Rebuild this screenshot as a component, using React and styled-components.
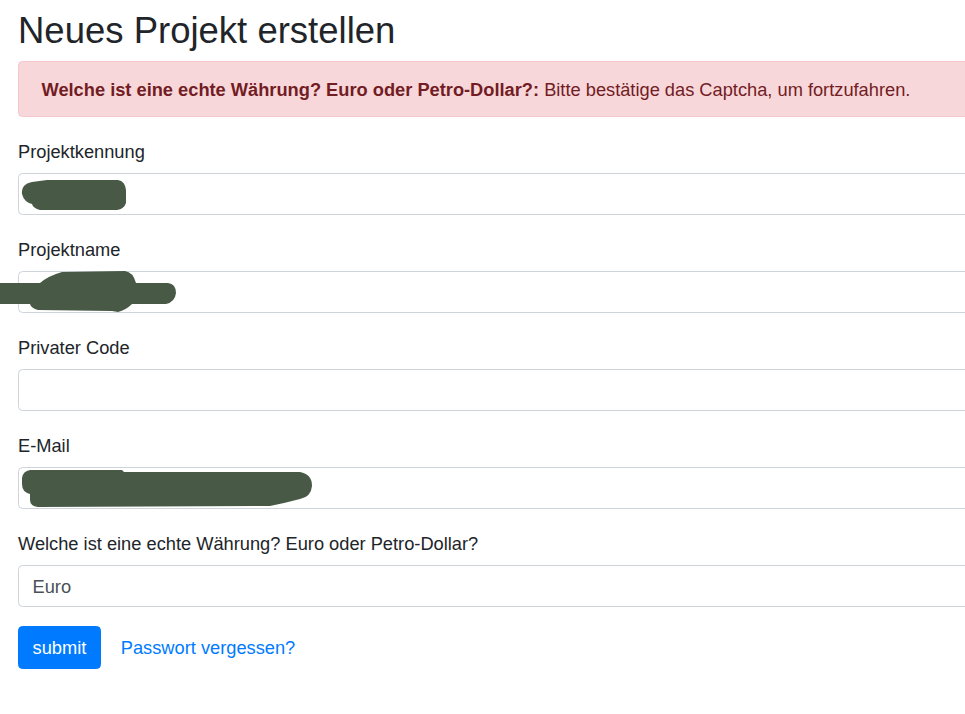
import React from "react";
import styled, { createGlobalStyle } from "styled-components";

const GlobalStyle = createGlobalStyle`
  html, body {
    margin: 0;
    padding: 0;
    overflow: hidden;
    background: #ffffff;
  }
  body {
    font-family: "Liberation Sans", Arial, sans-serif;
    font-size: 18.25px;
    line-height: 1.5;
    color: #212529;
  }
  * { box-sizing: border-box; }
`;

const Page = styled.div`
  position: relative;
  width: 1100px;
  padding: 9px 0 40px 18px;
`;

const Title = styled.h2`
  margin: 0 0 9px;
  font-size: 36.5px;
  font-weight: 400;
  line-height: 43px;
  color: #212529;
`;

const Alert = styled.div`
  padding: 14px 22.5px 13px;
  margin-bottom: 21px;
  border: 1px solid #f5c6cb;
  border-radius: 4.5px;
  background: #f8d7da;
  color: #721c24;
  line-height: 27px;
`;

const Strong = styled.strong`
  font-weight: 700;
`;

const Form = styled.form`
  display: flex;
  flex-direction: column;
`;

const Group = styled.div`
  display: flex;
  flex-direction: column;
  margin-bottom: 21px;
`;

const Label = styled.label`
  display: block;
  margin-bottom: 8px;
  line-height: 27px;
`;

const fieldCss = `
  display: block;
  width: 100%;
  height: 42px;
  padding: 6.75px 13.5px;
  font-family: "Liberation Sans", Arial, sans-serif;
  font-size: 18.25px;
  line-height: 27px;
  color: #495057;
  background: #fff;
  border: 1px solid #ced4da;
  border-radius: 4.5px;
  outline: none;
`;

const Input = styled.input`
  ${fieldCss}
`;

const Select = styled.select`
  ${fieldCss}
  appearance: none;
  -webkit-appearance: none;
`;

const Actions = styled.div`
  display: flex;
  align-items: center;
  gap: 20px;
  margin-top: -2px;
`;

const Button = styled.button`
  height: 43px;
  padding: 6.75px 13.5px;
  font-family: "Liberation Sans", Arial, sans-serif;
  font-size: 18.25px;
  line-height: 27px;
  color: #fff;
  background: #007bff;
  border: 1px solid #007bff;
  border-radius: 4.5px;
  cursor: pointer;
`;

const Link = styled.a`
  color: #007bff;
  text-decoration: none;
  font-size: 18.25px;
  line-height: 27px;
`;

const Redactions = styled.svg`
  position: absolute;
  top: 0;
  left: 0;
  width: 965px;
  height: 714px;
  pointer-events: none;
`;

const blobColor = "#485a46";

export default function App() {
  return (
    <>
      <GlobalStyle />
      <Page>
        <Title>Neues Projekt erstellen</Title>
        <Alert>
          <Strong>Welche ist eine echte Währung? Euro oder Petro-Dollar?:</Strong>{" "}
          Bitte bestätige das Captcha, um fortzufahren.
        </Alert>
        <Form onSubmit={(e) => e.preventDefault()}>
          <Group>
            <Label htmlFor="kennung">Projektkennung</Label>
            <Input id="kennung" type="text" />
          </Group>
          <Group>
            <Label htmlFor="name">Projektname</Label>
            <Input id="name" type="text" />
          </Group>
          <Group>
            <Label htmlFor="code">Privater Code</Label>
            <Input id="code" type="text" />
          </Group>
          <Group>
            <Label htmlFor="email">E-Mail</Label>
            <Input id="email" type="email" />
          </Group>
          <Group>
            <Label htmlFor="captcha">Welche ist eine echte Währung? Euro oder Petro-Dollar?</Label>
            <Select id="captcha" defaultValue="Euro">
              <option value="Euro">Euro</option>
              <option value="Petro-Dollar">Petro-Dollar</option>
            </Select>
          </Group>
          <Actions>
            <Button type="submit">submit</Button>
            <Link href="#">Passwort vergessen?</Link>
          </Actions>
        </Form>
        <Redactions viewBox="0 0 965 714">
          <path
            fill={blobColor}
            d="M47,180 L118,180 Q125,181 126,190 L126,203 Q124,209 117,210 L40,210 Q33,208 32,204 Q24,202 22,194 Q21,184 32,182 Z"
          />
          <path
            fill={blobColor}
            d="M0,283 L40,283 Q48,276 62,272 L125,271 Q133,272 136,283 L168,283 Q176,284 176,293 Q175,302 166,304 L132,304 Q126,310 118,312 L112,311 L38,310 Q31,308 30,304 L0,304 Z"
          />
          <path
            fill={blobColor}
            d="M30,470 L122,470 L124,472 L300,472 Q312,474 312,486 Q311,497 300,499 Q285,503 270,506 L38,507 Q30,506 30,500 L30,494 Q22,492 22,484 L22,478 Q23,471 30,470 Z"
          />
        </Redactions>
      </Page>
    </>
  );
}
